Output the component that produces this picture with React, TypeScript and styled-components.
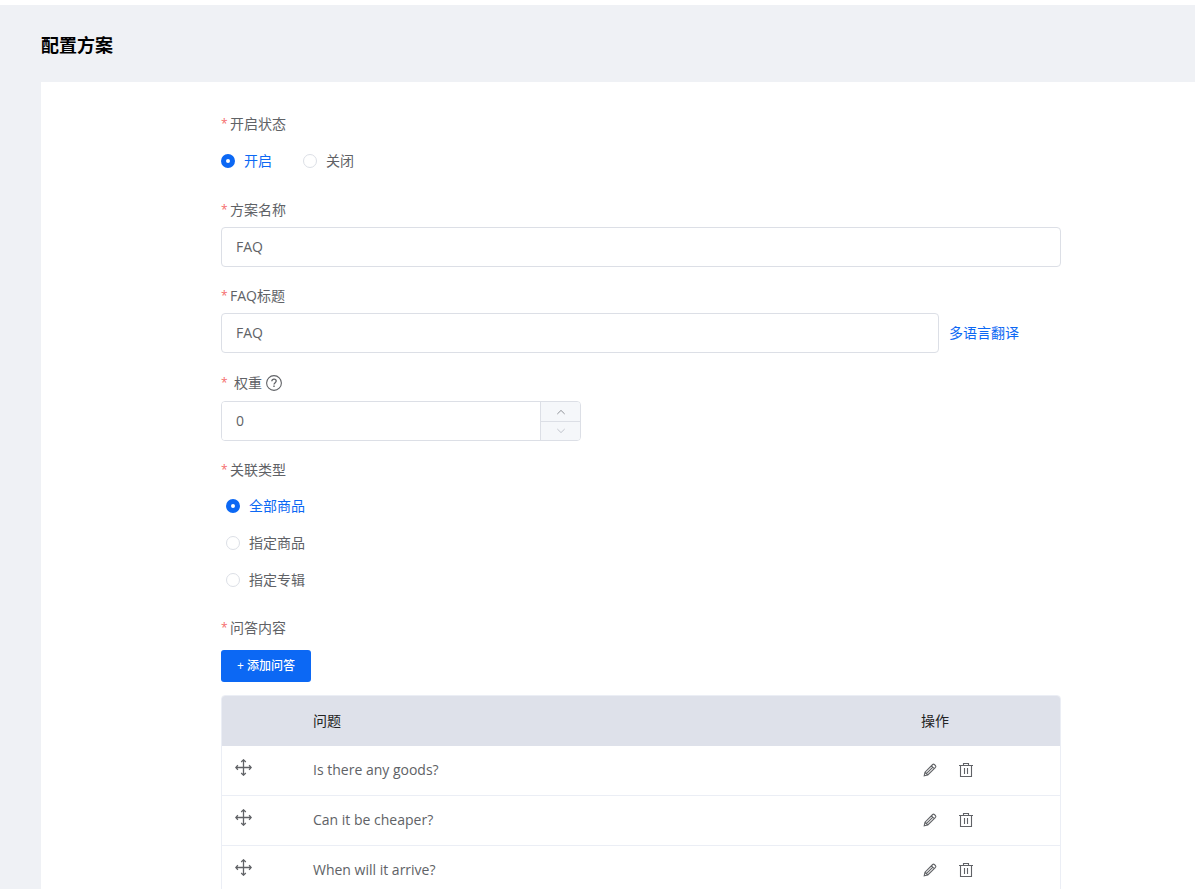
import React, { useState } from "react";
import styled, { createGlobalStyle, css } from "styled-components";

const blue = "#0c68f4";
const text = "#606266";
const border = "#dcdfe6";

const GlobalStyle = createGlobalStyle`
  * { box-sizing: border-box; }
  body {
    margin: 0;
    background: #fff;
    color: ${text};
    font: 14px/24px "Open Sans", "Noto Sans CJK SC", sans-serif;
  }
  button, input { font: inherit; color: inherit; }
`;

const Page = styled.main`
  min-height: calc(100vh - 5px);
  margin-top: 5px;
  padding: 24px 0 0 41px;
  background: #eff1f5;
`;

const Title = styled.h1`
  margin: 0 0 21px;
  color: #000;
  font-size: 18px;
  line-height: 32px;
  font-weight: 700;
`;

const Card = styled.section`
  padding: 30px 40px 40px 180px;
  background: #fff;
`;

const Form = styled.form`
  display: flex;
  flex-direction: column;
  gap: 17px;
  max-width: 840px;
`;

const Item = styled.div`
  display: flex;
  flex-direction: column;
  gap: 5px;
  min-width: 0;
  margin: 0;
  padding: 0;
  border: 0;
`;

const labelStyle = css`
  display: flex;
  align-items: center;
  gap: 4px;
  min-height: 24px;
  padding: 0;
  &::before {
    content: "*";
    width: 5px;
    color: #f56c6c;
    font-size: 12px;
  }
`;

const Label = styled.label`${labelStyle}`;
const GroupLabel = styled.div`${labelStyle}`;

const WeightLabel = styled(Label)`
  min-height: 26px;
  gap: 8px;
`;

const WithHelp = styled.span`
  display: flex;
  align-items: center;
  gap: 4px;
`;

const RadioGroup = styled.div<{ $stacked?: boolean }>`
  display: flex;
  ${(p) =>
    p.$stacked
      ? css`
          flex-direction: column;
          align-items: flex-start;
          padding: 0 0 1px 5px;
        `
      : css`
          gap: 31px;
        `}
`;

const RadioLabel = styled.label<{ $on: boolean; $tall?: boolean }>`
  display: flex;
  align-items: center;
  gap: 9px;
  height: ${(p) => (p.$tall ? 40 : 37)}px;
  color: ${(p) => (p.$on ? blue : text)};
  cursor: pointer;
`;

const Radio = styled.input`
  appearance: none;
  width: 14px;
  height: 14px;
  margin: 0;
  border: 1px solid ${border};
  border-radius: 50%;
  background: #fff;
  &:checked {
    border: 5px solid ${blue};
  }
`;

const TextInput = styled.input`
  flex: 1;
  min-width: 0;
  width: 100%;
  height: 40px;
  min-height: 40px;
  padding: 0 14px 1px;
  border: 1px solid ${border};
  border-radius: 4px;
  background: #fff;
  outline: none;
  &:focus { border-color: ${blue}; }
`;

const InputRow = styled.div`
  display: grid;
  grid-template-columns: 1fr 112px;
  align-items: center;
  gap: 10px;
`;

const Link = styled.a`
  color: ${blue};
  text-decoration: none;
`;

const NumberBox = styled.div`
  display: flex;
  width: 360px;
  max-width: 100%;
  height: 40px;
  border: 1px solid ${border};
  border-radius: 4px;
  overflow: hidden;
`;

const NumberInput = styled.input`
  flex: 1;
  min-width: 0;
  padding: 0 14px;
  border: 0;
  outline: none;
`;

const Steps = styled.div`
  display: grid;
  grid-template-rows: 1fr 1fr;
  width: 40px;
  border-left: 1px solid ${border};
`;

const Step = styled.button`
  display: grid;
  place-items: center;
  padding: 0;
  border: 0;
  background: #f5f7fa;
  color: #909399;
  cursor: pointer;
  & + & { border-top: 1px solid ${border}; }
  &:disabled { color: #c0c4cc; cursor: not-allowed; }
`;

const AddButton = styled.button`
  align-self: flex-start;
  min-width: 90px;
  height: 32px;
  margin: 5px 0 8px;
  padding: 0 15px;
  border: 0;
  border-radius: 3px;
  background: ${blue};
  color: #fff;
  font-size: 12px;
  font-weight: 500;
  cursor: pointer;
`;

const Table = styled.table`
  width: 100%;
  table-layout: fixed;
  border: 1px solid #ebeef5;
  border-radius: 4px;
  border-spacing: 0;
  overflow: hidden;
`;

const Head = styled.th<{ $width?: number }>`
  width: ${(p) => (p.$width ? `${p.$width}px` : "auto")};
  height: 50px;
  padding: 0 13px;
  background: #dee1ea;
  color: #222;
  font-weight: 400;
  text-align: left;
`;

const Cell = styled.td`
  height: 50px;
  padding: 0 13px 2px;
  border-bottom: 1px solid #ebeef5;
`;

const Actions = styled.div`
  display: flex;
  gap: 20px;
  padding-left: 1px;
`;

const IconButton = styled.button`
  display: grid;
  place-items: center;
  width: 16px;
  height: 16px;
  padding: 0;
  border: 0;
  background: none;
  cursor: pointer;
`;

const DragHandle = styled(IconButton)`
  width: 17px;
  height: 22px;
  place-items: start;
  cursor: move;
`;

const Svg = styled.svg`
  display: block;
  fill: none;
  stroke: currentColor;
`;

const HelpIcon = () => (
  <Svg width="16" height="16" viewBox="0 0 16 16" strokeWidth="1.1" aria-hidden="true">
    <circle cx="8" cy="8" r="7.4" />
    <path d="M5.8 6.3C5.8 4.9 6.7 4.1 8 4.1s2.2.8 2.2 2c0 1.5-2.2 1.7-2.2 3.4" strokeWidth="1.3" />
    <path d="M8 10.6v1.4" strokeWidth="1.4" />
  </Svg>
);

const MoveIcon = () => (
  <Svg width="17" height="17" viewBox="0 0 17 17" strokeWidth="1.3" aria-hidden="true">
    <path d="M8.5 1v15M1 8.5h15" />
    <path d="M6.2 2.9 8.5.8l2.3 2.1M6.2 14.1l2.3 2.1 2.3-2.1M2.9 6.2.8 8.5l2.1 2.3M14.1 6.2l2.1 2.3-2.1 2.3" />
  </Svg>
);

const EditIcon = () => (
  <Svg width="14" height="14" viewBox="0 0 14 14" strokeWidth="1.1" aria-hidden="true">
    <path d="M1.2 12.8 2 9.2 9.7 1.5q.8-.7 1.6 0l1.2 1.2q.7.8 0 1.6L4.8 12 1.2 12.8ZM8.4 2.8l2.8 2.8M2 9.2 4.8 12M3.6 10.4l5.8-5.8" />
  </Svg>
);

const DeleteIcon = () => (
  <Svg width="16" height="16" viewBox="0 0 16 16" strokeWidth="1.1" aria-hidden="true">
    <path d="M1 3.5h14M2.5 3.5v11h11v-11M5.5 3.5v-2h5v2" />
    <path d="M6.5 6v6M9.5 6v6" />
  </Svg>
);

const Chevron = ({ down }: { down?: boolean }) => (
  <Svg width="10" height="6" viewBox="0 0 10 6" aria-hidden="true">
    <path d={down ? "M1.3 1 5 4.6 8.7 1" : "M1.3 5 5 1.4 8.7 5"} />
  </Svg>
);

const scopes = ["全部商品", "指定商品", "指定专辑"];
const questions = ["Is there any goods?", "Can it be cheaper?", "When will it arrive?"];

export default function App() {
  const [status, setStatus] = useState("开启");
  const [scope, setScope] = useState(scopes[0]);
  const [weight, setWeight] = useState(0);

  return (
    <>
      <GlobalStyle />
      <Page>
        <Title>配置方案</Title>
        <Card>
          <Form onSubmit={(e) => e.preventDefault()}>
            <Item role="radiogroup" aria-labelledby="status-label">
              <GroupLabel id="status-label">开启状态</GroupLabel>
              <RadioGroup>
                {["开启", "关闭"].map((s) => (
                  <RadioLabel key={s} $on={s === status} $tall>
                    <Radio type="radio" name="status" checked={s === status} onChange={() => setStatus(s)} />
                    {s}
                  </RadioLabel>
                ))}
              </RadioGroup>
            </Item>

            <Item>
              <Label htmlFor="plan">方案名称</Label>
              <TextInput id="plan" defaultValue="FAQ" />
            </Item>

            <Item>
              <Label htmlFor="faq-title">FAQ标题</Label>
              <InputRow>
                <TextInput id="faq-title" defaultValue="FAQ" />
                <Link href="#translate">多语言翻译</Link>
              </InputRow>
            </Item>

            <Item>
              <WeightLabel htmlFor="weight">
                <WithHelp>
                  权重
                  <HelpIcon />
                </WithHelp>
              </WeightLabel>
              <NumberBox>
                <NumberInput
                  id="weight"
                  inputMode="numeric"
                  value={weight}
                  onChange={(e) => setWeight(Number(e.target.value) || 0)}
                />
                <Steps>
                  <Step type="button" aria-label="增加" onClick={() => setWeight(weight + 1)}>
                    <Chevron />
                  </Step>
                  <Step type="button" aria-label="减少" disabled={weight <= 0} onClick={() => setWeight(weight - 1)}>
                    <Chevron down />
                  </Step>
                </Steps>
              </NumberBox>
            </Item>

            <Item role="radiogroup" aria-labelledby="scope-label">
              <GroupLabel id="scope-label">关联类型</GroupLabel>
              <RadioGroup $stacked>
                {scopes.map((s) => (
                  <RadioLabel key={s} $on={s === scope}>
                    <Radio type="radio" name="scope" checked={s === scope} onChange={() => setScope(s)} />
                    {s}
                  </RadioLabel>
                ))}
              </RadioGroup>
            </Item>

            <Item>
              <GroupLabel>问答内容</GroupLabel>
              <AddButton type="button">+ 添加问答</AddButton>
              <Table>
                <thead>
                  <tr>
                    <Head $width={78} aria-label="排序" />
                    <Head>问题</Head>
                    <Head $width={152}>操作</Head>
                  </tr>
                </thead>
                <tbody>
                  {questions.map((q) => (
                    <tr key={q}>
                      <Cell>
                        <DragHandle type="button" aria-label="拖动排序">
                          <MoveIcon />
                        </DragHandle>
                      </Cell>
                      <Cell>{q}</Cell>
                      <Cell>
                        <Actions>
                          <IconButton type="button" aria-label="编辑">
                            <EditIcon />
                          </IconButton>
                          <IconButton type="button" aria-label="删除">
                            <DeleteIcon />
                          </IconButton>
                        </Actions>
                      </Cell>
                    </tr>
                  ))}
                </tbody>
              </Table>
            </Item>
          </Form>
        </Card>
      </Page>
    </>
  );
}
